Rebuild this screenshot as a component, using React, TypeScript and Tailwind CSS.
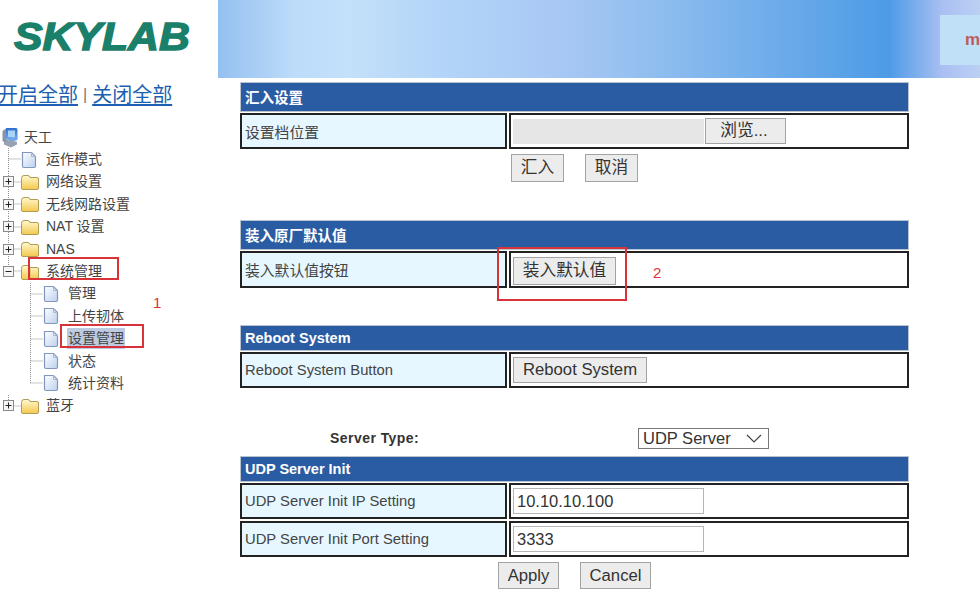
import React from "react";

const sans = "[font-family:'Liberation_Sans','Noto_Sans_CJK_SC',sans-serif]";

function Folder({ open }: { open?: boolean }) {
  return (
    <svg width="20" height="18" viewBox="0 0 20 18" className="shrink-0">
      <defs>
        <linearGradient id="fg" x1="0" y1="0" x2="0" y2="1">
          <stop offset="0" stopColor="#fff8cf" />
          <stop offset="1" stopColor="#f3c94e" />
        </linearGradient>
      </defs>
      <path d="M1.5 5.5 Q1.5 2.5 4 2.5 H8 Q9.5 2.5 10 4.5 H17 Q18.5 4.5 18.5 6 V15 Q18.5 16.5 17 16.5 H3 Q1.5 16.5 1.5 15 Z" fill="url(#fg)" stroke="#b09c52" strokeWidth="1" />
      {open && <path d="M10 5 V16" stroke="#d9bb55" strokeWidth="1" />}
    </svg>
  );
}

function FileIcon() {
  return (
    <svg width="16" height="18" viewBox="0 0 16 18" className="shrink-0">
      <defs>
        <linearGradient id="pg" x1="0" y1="0" x2="1" y2="1">
          <stop offset="0" stopColor="#ffffff" />
          <stop offset="1" stopColor="#bcd0ee" />
        </linearGradient>
      </defs>
      <path d="M1.5 1.5 H10.5 L14.5 5.5 V15 Q14.5 16.5 13 16.5 H3 Q1.5 16.5 1.5 15 Z" fill="url(#pg)" stroke="#8496bd" strokeWidth="1.2" />
      <path d="M10.5 1.5 V5.5 H14.5" fill="none" stroke="#a9b8d4" strokeWidth="1" />
    </svg>
  );
}

function Computer() {
  return (
    <svg width="16" height="21" viewBox="0 0 16 21" className="shrink-0">
      <defs>
        <linearGradient id="cg" x1="0" y1="0" x2="0" y2="1">
          <stop offset="0" stopColor="#2f6fd0" />
          <stop offset="1" stopColor="#7fb4ee" />
        </linearGradient>
      </defs>
      <path d="M4 1 H14 Q15.5 1 15.5 3 V13 L10 15 L4 12 Z" fill="url(#cg)" />
      <path d="M6 3.5 H13 V10.5 L6 10 Z" fill="#a8d4fa" />
      <path d="M0.5 4 L4 1.5 V12 L8 15 V19 L0.5 14 Z" fill="#8a93a8" />
      <path d="M2 15 L8 13 L15 15 V17.5 L9 20.5 L2 17.5 Z" fill="#98a0b4" />
    </svg>
  );
}

function Box({ minus }: { minus?: boolean }) {
  return (
    <svg width="11" height="11" viewBox="0 0 11 11" className="shrink-0">
      <rect x="0.5" y="0.5" width="10" height="10" fill="#f6f6f6" stroke="#8a8a8a" />
      <path d="M2.5 5.5 H8.5" stroke="#222" />
      {!minus && <path d="M5.5 2.5 V8.5" stroke="#222" />}
    </svg>
  );
}

const Dots = ({ d, w }: { d: string; w: number }) => (
  <svg width={w} height="22.4" viewBox={`0 0 ${w} 22.4`} className="absolute left-0 top-0">
    <path d={d} fill="none" stroke="#8f8f8f" strokeDasharray="1 1" />
  </svg>
);

function TopFolder({ label, open, end }: { label: string; open?: boolean; end?: boolean }) {
  return (
    <div className="relative flex h-[22.4px] items-center pl-[3px]">
      <Dots w={21} d={end || open ? "M8.5 0 V11 M8.5 11 H21" : "M8.5 0 V22.4 M8.5 11 H21"} />
      <div className="relative flex items-center">
        <Box minus={open} />
      </div>
      <div className="relative ml-[6px]"><Folder open={open} /></div>
      <span className="ml-[6px]">{label}</span>
    </div>
  );
}

function Child({ label, selected, last }: { label: string; selected?: boolean; last?: boolean }) {
  return (
    <div className="relative flex h-[22.4px] items-center pl-[43px]">
      <Dots w={43} d={last ? "M30.5 0 V11 M30.5 11 H43" : "M30.5 0 V22.4 M30.5 11 H43"} />
      <FileIcon />
      <span className={selected ? "ml-[8px] bg-[#bccbe2] pr-[1px] pl-[1px]" : "ml-[9px]"}>{label}</span>
    </div>
  );
}

function SectionHead({ children, h, cjk }: { children: React.ReactNode; h: string; cjk?: boolean }) {
  return (
    <div className={`${h} ${cjk ? "pt-[4px]" : "pt-[2px]"} flex items-center border border-[#b9c3cf] bg-[#2a5ca3] pl-[4px] text-[14.5px] font-bold text-white`}>
      {children}
    </div>
  );
}

function Row({ label, h, cjk, children }: { label: string; h: string; cjk?: boolean; children: React.ReactNode }) {
  return (
    <div className={`${h} flex gap-[2px]`}>
      <div className={`${cjk ? "pt-[4px]" : "pt-[1px]"} flex w-[267px] items-center border-2 border-[#222] bg-[#e6f7ff] pl-[3px] text-[14.8px] text-[#444]`}>
        {label}
      </div>
      <div className="flex w-[400px] items-center border-2 border-[#222] bg-white pl-[2px]">{children}</div>
    </div>
  );
}

function Btn({ children, w, h }: { children: React.ReactNode; w: string; h: string }) {
  return (
    <div className={`${w} ${h} flex items-center justify-center border border-[#a3a3a3] bg-[#ececec] text-[16.7px] text-[#333]`}>
      {children}
    </div>
  );
}

function Input({ value }: { value: string }) {
  return (
    <div className="flex h-[26px] w-[191px] items-center border border-[#b5b5b5] bg-white pl-[3px] text-[16.5px] text-[#333]">
      {value}
    </div>
  );
}

export default function App() {
  return (
    <div className={`relative h-[596px] w-[980px] overflow-hidden bg-white ${sans}`}>
      <div className="flex h-[78px]">
        <div className="flex w-[218px] shrink-0 items-center pb-[4px] pl-[14px]">
          <span className="origin-left scale-x-[1.125] text-[38px] leading-none font-bold text-[#1b806a] italic [-webkit-text-stroke:1.4px_#1b806a]">
            SKYLAB
          </span>
        </div>
        <div className="flex flex-1 items-center justify-end overflow-hidden bg-[linear-gradient(90deg,#94c0f0_0%,#bcdcfa_10%,#c4e0fa_17%,#b2d4f8_30%,#a8c8f4_45%,#8cbcee_59%,#4d9be6_88%,#a9bff2_95%,#bcd0f4_100%)] pt-[2px]">
          <div className="flex h-[50px] w-[40px] items-center justify-end overflow-hidden bg-[#bfe0f7] pl-[24px]">
            <span className="text-[17px] font-bold text-[#c05a5a]">m</span>
          </div>
        </div>
      </div>

      <div className="flex">
        <div className="w-[240px] shrink-0">
          <div className="mt-[3px] -ml-[2px] flex h-[28px] items-center text-[20px] text-[#1d5fb0]">
            <span className="underline underline-offset-2">开启全部</span>
            <span className="mx-[5px] text-[16px] text-[#777]">|</span>
            <span className="underline underline-offset-2">关闭全部</span>
          </div>
          <div className="mt-[17px] text-[14px] text-[#444]">
            <div className="flex h-[22.4px] items-center pl-[2px]">
              <Computer />
              <span className="ml-[6px]">天工</span>
            </div>
            <div className="relative flex h-[22.4px] items-center pl-[21px]">
              <Dots w={21} d="M8.5 0 V22.4 M8.5 11 H21" />
              <FileIcon />
              <span className="ml-[9px]">运作模式</span>
            </div>
            <TopFolder label="网络设置" />
            <TopFolder label="无线网路设置" />
            <TopFolder label="NAT 设置" />
            <TopFolder label="NAS" />
            <TopFolder label="系统管理" open />
            <Child label="管理" />
            <Child label="上传韧体" />
            <Child label="设置管理" selected />
            <Child label="状态" />
            <Child label="统计资料" last />
            <TopFolder label="蓝牙" end />
          </div>
        </div>

        <div className="w-[669px] pt-[4px]">
          <SectionHead h="h-[30px]" cjk>汇入设置</SectionHead>
          <div className="mt-[1px]">
            <Row label="设置档位置" h="h-[36px]" cjk>
              <div className="h-[25px] w-[191px] bg-[#e6e6e6]" />
              <div className="ml-[1px] flex h-[26px] w-[81px] items-center justify-center border border-[#a3a3a3] bg-[#ececec] pr-[3px] text-[16.7px] text-[#333]">
                浏览...
              </div>
            </Row>
          </div>
          <div className="mt-[5px] flex gap-[21px] pl-[271px]">
            <Btn w="w-[53px]" h="h-[28px]">汇入</Btn>
            <Btn w="w-[53px]" h="h-[28px]">取消</Btn>
          </div>

          <div className="mt-[38px]">
            <SectionHead h="h-[30px]" cjk>装入原厂默认值</SectionHead>
          </div>
          <div className="mt-[1px]">
            <Row label="装入默认值按钮" h="h-[37px]" cjk>
              <div className="mt-[2px]">
                <Btn w="w-[103px]" h="h-[28px]">装入默认值</Btn>
              </div>
            </Row>
          </div>

          <div className="mt-[37px]">
            <SectionHead h="h-[26px]">Reboot System</SectionHead>
          </div>
          <div className="mt-[1px]">
            <Row label="Reboot System Button" h="h-[36px]">
              <Btn w="w-[134px]" h="h-[26px]">Reboot System</Btn>
            </Row>
          </div>

          <div className="mt-[40px] flex h-[21px] items-center">
            <div className="w-[398px] pl-[90px] text-[14px] font-bold tracking-[0.45px] text-[#333]">Server Type:</div>
            <div className="flex h-[21px] w-[131px] items-center justify-between border border-[#777] bg-white pr-[6px] pl-[4px] text-[16.5px] text-[#333]">
              UDP Server
              <svg width="16" height="9" viewBox="0 0 16 9">
                <path d="M1 1 L8 8 L15 1" fill="none" stroke="#444" strokeWidth="1.2" />
              </svg>
            </div>
          </div>

          <div className="mt-[7px]">
            <SectionHead h="h-[26px]">UDP Server Init</SectionHead>
          </div>
          <div className="mt-[1px] flex flex-col gap-[2px]">
            <Row label="UDP Server Init IP Setting" h="h-[36px]">
              <Input value="10.10.10.100" />
            </Row>
            <Row label="UDP Server Init Port Setting" h="h-[36px]">
              <Input value="3333" />
            </Row>
          </div>
          <div className="mt-[5px] flex gap-[21px] pl-[258px]">
            <Btn w="w-[61px]" h="h-[27px]">Apply</Btn>
            <Btn w="w-[71px]" h="h-[27px]">Cancel</Btn>
          </div>
        </div>
      </div>

      {/* hand-drawn annotations over the screenshot */}
      <div className="absolute top-[257px] left-[28px] h-[23px] w-[91px] border-2 border-[#d9333a]" />
      <div className="absolute top-[324px] left-[60px] h-[24px] w-[84px] border-2 border-[#d9333a]" />
      <div className="absolute top-[247px] left-[497px] h-[54px] w-[130px] border-2 border-[#d9333a]" />
      <span className="absolute top-[292px] left-[153px] text-[15px] text-[#d9333a]">1</span>
      <span className="absolute top-[262px] left-[653px] text-[15px] text-[#d9333a]">2</span>
    </div>
  );
}
